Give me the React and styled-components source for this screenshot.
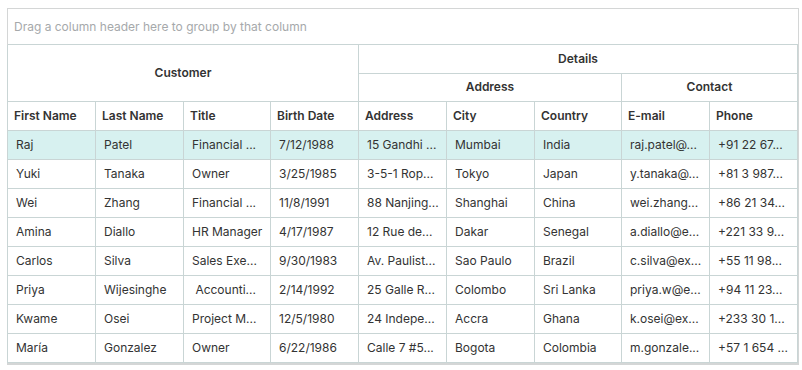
import styled, { createGlobalStyle } from 'styled-components'

const Global = createGlobalStyle`
    body {
        margin: 0;
        background: #ffffff;
        font-family: Inter, "Noto Sans", sans-serif;
    }
`

const cols = ['First Name', 'Last Name', 'Title', 'Birth Date', 'Address', 'City', 'Country', 'E-mail', 'Phone']

const rows = [
    ['Raj', 'Patel', 'Financial ...', '7/12/1988', '15 Gandhi ...', 'Mumbai', 'India', 'raj.patel@...', '+91 22 67...'],
    ['Yuki', 'Tanaka', 'Owner', '3/25/1985', '3-5-1 Rop...', 'Tokyo', 'Japan', 'y.tanaka@...', '+81 3 987...'],
    ['Wei', 'Zhang', 'Financial ...', '11/8/1991', '88 Nanjing...', 'Shanghai', 'China', 'wei.zhang...', '+86 21 34...'],
    ['Amina', 'Diallo', 'HR Manager', '4/17/1987', '12 Rue de...', 'Dakar', 'Senegal', 'a.diallo@e...', '+221 33 9...'],
    ['Carlos', 'Silva', 'Sales Exe...', '9/30/1983', 'Av. Paulist...', 'Sao Paulo', 'Brazil', 'c.silva@ex...', '+55 11 98...'],
    ['Priya', 'Wijesinghe', ' Accounti...', '2/14/1992', '25 Galle R...', 'Colombo', 'Sri Lanka', 'priya.w@e...', '+94 11 23...'],
    ['Kwame', 'Osei', 'Project M...', '12/5/1980', '24 Indepe...', 'Accra', 'Ghana', 'k.osei@ex...', '+233 30 1...'],
    ['María', 'Gonzalez', 'Owner', '6/22/1986', 'Calle 7 #5...', 'Bogota', 'Colombia', 'm.gonzale...', '+57 1 654 ...'],
]

export default function App() {
    return (
        <>
            <Global />
            <Page>
                <Grid>
                    <GroupPanel>Drag a column header here to group by that column</GroupPanel>
                    <Table>
                        <colgroup>
                            {cols.map((c, i) => <col key={c} style={{ width: i % 4 === 2 ? 87 : 88 }} />)}
                        </colgroup>
                        <thead>
                            <HeadRow $h={28}>
                                <Band colSpan={4} rowSpan={2}>Customer</Band>
                                <Band colSpan={5}>Details</Band>
                            </HeadRow>
                            <HeadRow $h={28}>
                                <Band colSpan={3}>Address</Band>
                                <Band colSpan={2}>Contact</Band>
                            </HeadRow>
                            <HeadRow $h={29}>
                                {cols.map(c => <Head key={c}>{c}</Head>)}
                            </HeadRow>
                        </thead>
                        <tbody>
                            {rows.map((r, i) => (
                                <Row key={i} $selected={i === 0}>
                                    {r.map((v, j) => <Cell key={j}>{v}</Cell>)}
                                </Row>
                            ))}
                        </tbody>
                    </Table>
                    <Scroll />
                </Grid>
            </Page>
        </>
    )
}

const Page = styled.div`
    padding: 8px 0 0 7px;
`
const Grid = styled.div`
    box-sizing: border-box;
    width: 792px;
    border: 1px solid #d4d6d6;
    border-bottom: none;
    background: #fff;
`
const GroupPanel = styled.div`
    height: 35px;
    display: flex;
    align-items: center;
    padding-left: 6px;
    font-size: 12px;
    color: #a6a9ab;
    border-bottom: 1px solid #c9d5d5;
`
const Table = styled.table`
    border-collapse: collapse;
    table-layout: fixed;
    width: 789px;
    margin-left: -1px;
    font-size: 12px;
    line-height: 14px;
    color: #333;
    td, th {
        border: 1px solid #c9d5d5;
        white-space: pre;
        overflow: hidden;
    }
    thead tr:first-child th {
        border-top: none;
    }
`
const HeadRow = styled.tr`
    height: ${p => p.$h}px;
`
const Band = styled.th`
    font-weight: 600;
    text-align: center;
    padding: 0 6px;
    color: #333;
`
const Head = styled.th`
    font-weight: 600;
    text-align: left;
    padding: 0 6px;
    color: #333;
`
const Row = styled.tr`
    height: 29px;
    background: ${p => (p.$selected ? '#d7f1f0' : '#fff')};
`
const Cell = styled.td`
    padding: 0 8px;
`
const Scroll = styled.div`
    height: 2px;
    background: #d4d6d6;
    margin-left: -1px;
    margin-right: -1px;
`
